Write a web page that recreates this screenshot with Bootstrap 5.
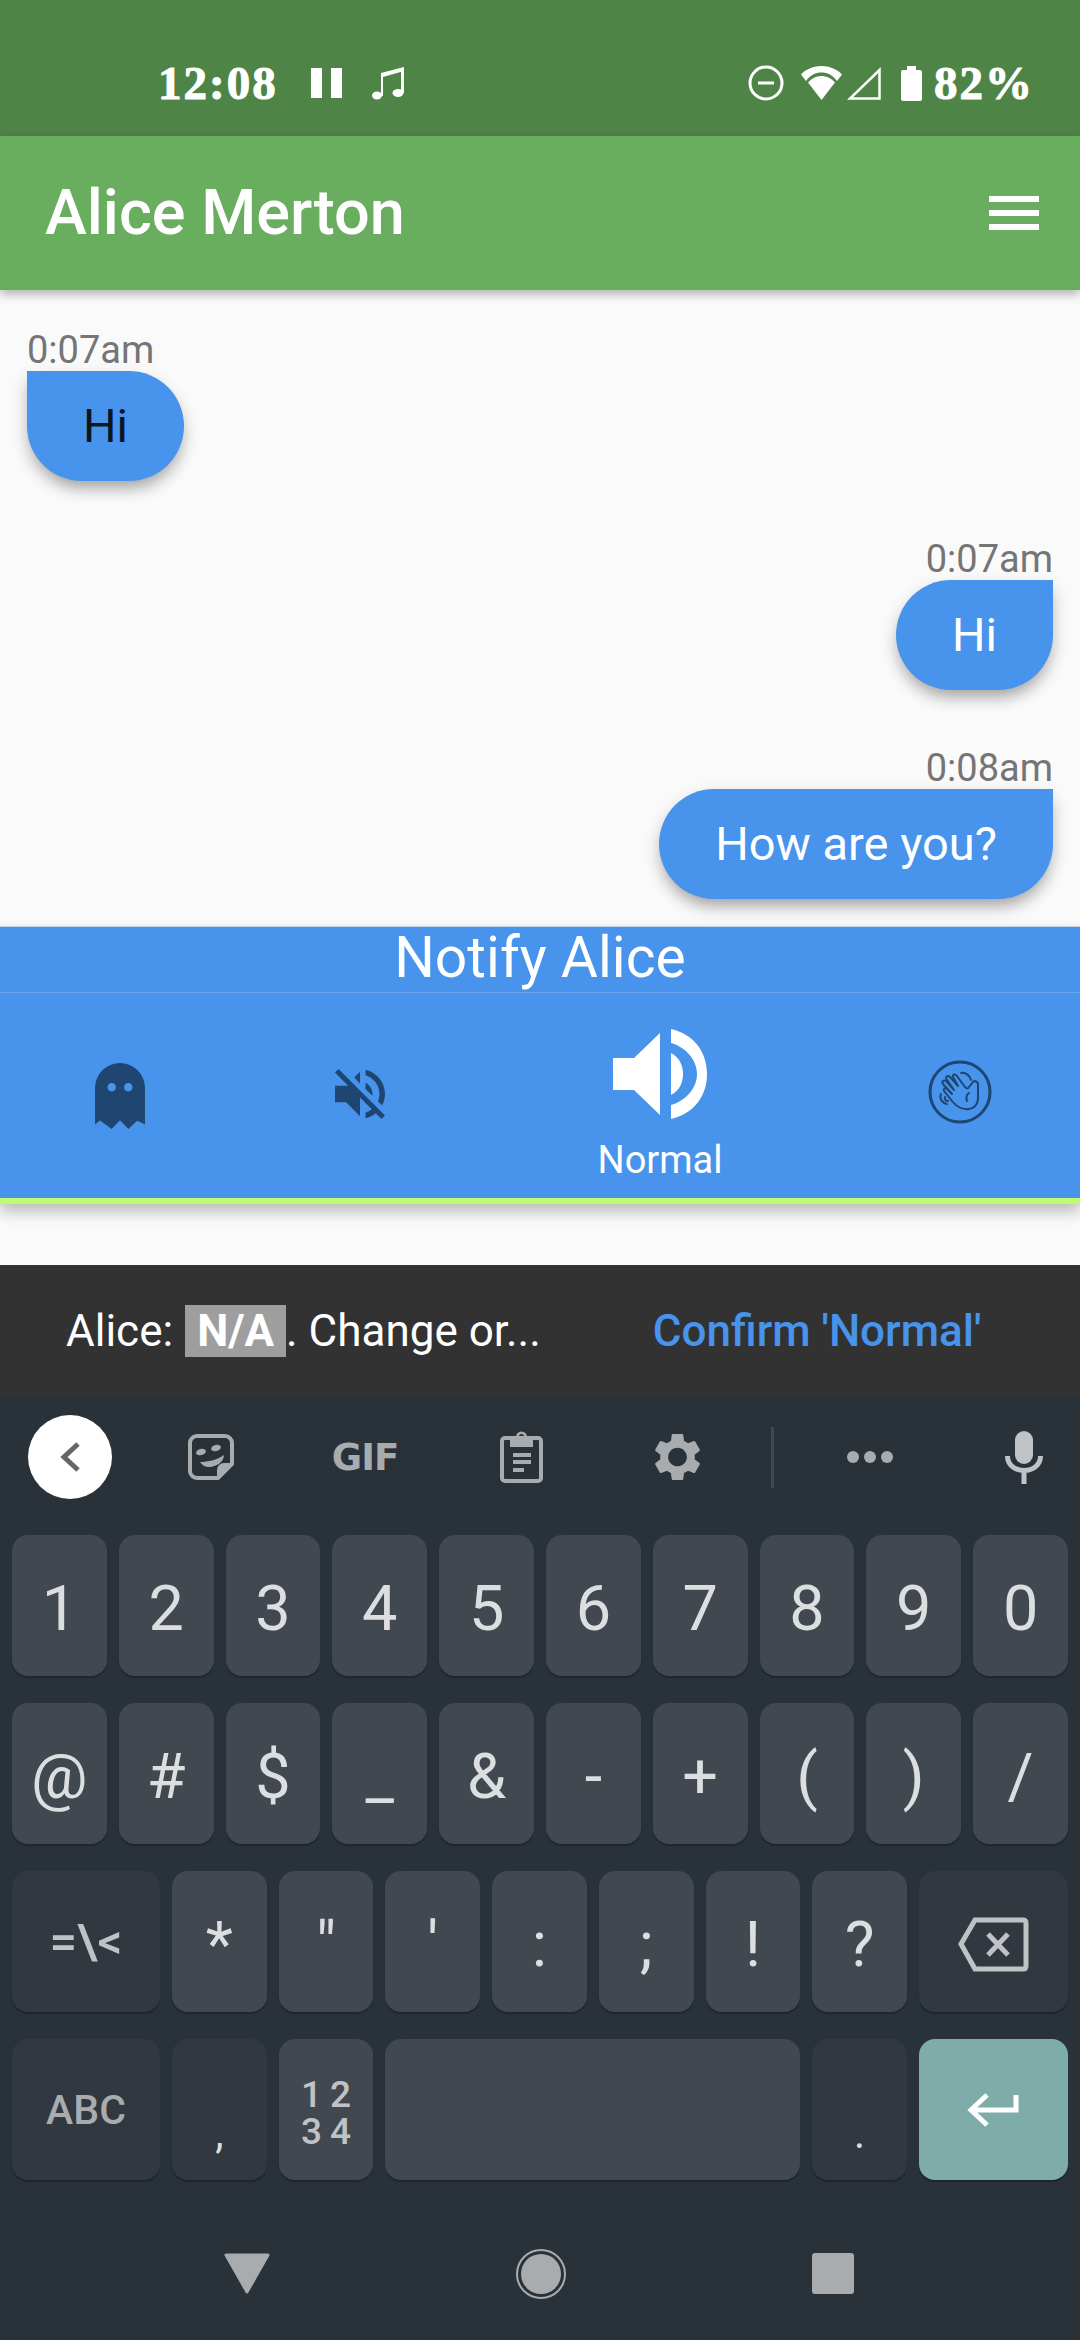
<!DOCTYPE html>
<html lang="en">
<head>
  <meta charset="UTF-8" />
  <meta name="viewport" content="width=device-width, initial-scale=1" />
  <title>Alice Merton</title>
  <link href="https://cdn.jsdelivr.net/npm/bootstrap@5.3.3/dist/css/bootstrap.min.css" rel="stylesheet" />
  <style>
    html, body { margin: 0; height: 2340px; overflow: hidden; }
    body { font-family: Roboto, sans-serif; background: #fafafa; }
    .phone { width: 1080px; height: 2340px; }

    .status-row { height: 136px; background: #4f8447; color: #fff; padding: 60px 46px 30px 158px; }
    .status-text { font: 700 47px "Liberation Serif", serif; line-height: 1; letter-spacing: 2px; -webkit-text-stroke: 1px #fff; }
    .st-pause { margin-left: 33px; }
    .st-note { margin-left: 30px; }
    .st-wifi { margin-left: 17px; }
    .st-signal { margin-left: 5px; }
    .st-batt { margin-left: 20px; }
    .st-pct { margin-left: 12px; }
    .app-head { height: 154px; background: #69ad5e; color: #fff; padding: 0 41px 0 45px; box-shadow: 0 4px 10px rgba(0,0,0,.3); position: relative; z-index: 2; }
    .app-title { font-size: 63px; font-weight: 500; }

    .chat-area { height: 636px; padding: 0 27px; }
    .chat-line { margin-top: 57px; }
    .chat-line:first-child { margin-top: 39px; }
    .chat-time { font-size: 38px; color: #757575; line-height: 42px; }
    .chat-bubble { height: 110px; background: #4893ec; font-size: 47px; padding: 0 56px; box-shadow: 0 10px 16px -4px rgba(0,0,0,.3), 0 6px 20px rgba(0,0,0,.1); }
    .bubble-in { border-radius: 0 55px 55px 55px; color: #0a1622; }
    .bubble-out { border-radius: 55px 0 55px 55px; color: #fff; }

    .notify-box { height: 278px; background: #4893ec; color: #fff; border-top: 1px solid #c5d5e5; border-bottom: 6px solid #bcfb72; box-shadow: 0 8px 14px rgba(0,0,0,.25); position: relative; z-index: 1; }
    .notify-title { height: 66px; font-size: 57px; line-height: 62px; text-align: center; border-bottom: 1px solid #6ba7ee; }
    .notify-opts { display: grid; grid-template-columns: 2fr 2fr 3fr 2fr; height: 205px; }
    .notify-on { padding-top: 36px; }
    .notify-label { font-size: 38px; line-height: 42px; margin-top: 20px; }
    .opt-mute { padding-bottom: 3px; }
    .opt-clap { padding-bottom: 8px; }

    .gap-strip { height: 61px; }
    .snack-box { height: 132px; background: #323232; color: #fff; font-size: 44px; padding-left: 66px; }
    .snack-tag { background: #9e9e9e; font-weight: 700; padding: 0 12px; margin-left: 12px; line-height: 52px; }
    .snack-action { color: #4893ec; font-weight: 500; margin-left: 112px; }

    .kb-area { height: 943px; background: #2a3239; color: #dcdee0; }
    .kb-tools { display: grid; grid-template-columns: 140px 142px 166px 146px 166px 24px 172px 136px; height: 138px; padding-bottom: 18px; overflow: hidden; }
    .back-circle { width: 84px; height: 84px; border-radius: 50%; background: #fff; }
    .gif-label { font: 700 37px "DejaVu Sans", sans-serif; letter-spacing: -1px; color: #a8acaf; }
    .kb-divider { width: 3px; height: 61px; background: #414950; }
    .kb-rows { display: flex; flex-direction: column; gap: 27px; padding: 0 12px; }
    .kb-row { display: grid; gap: 12px; height: 141px; }
    .kb-ten { grid-template-columns: repeat(10, 1fr); }
    .kb-low-row { grid-template-columns: 148px repeat(7, 1fr) 149px; }
    .kb-key { background: #41484f; border-radius: 16px; box-shadow: 0 2px 1px #1f262c; font-size: 63px; line-height: 1; padding-top: 6px; }
    .kb-dark { background: #31383f; }
    .kb-enter { background: #7eaca8; padding-top: 0; }
    .kb-span { grid-column: span 4; }
    .kb-low { font-size: 42px; padding-bottom: 25px; }
    .kb-abc { font-size: 41px; font-weight: 500; color: #a8acaf; padding-top: 2px; }
    .kb-mix { font-size: 49px; font-weight: 500; color: #c0c3c5; padding-top: 0; }
    .kb-small { font-size: 37px; font-weight: 500; line-height: 37px; letter-spacing: 8px; padding-left: 8px; text-align: center; color: #c0c3c5; }
    .nav-strip { height: 159px; padding: 28px 226px 0 224px; }
  </style>
</head>
<body>
  <div class="phone d-flex flex-column">
    <div class="status-row d-flex justify-content-between align-items-center">
      <div class="d-flex align-items-center">
        <span class="status-text">12:08</span>
        <svg class="st-pause" width="31" height="30" viewBox="0 0 31 30"><path fill="#fff" d="M0 0h11v30H0zM20 0h11v30H20z"/></svg>
        <svg class="st-note" width="32" height="33" viewBox="0 0 32 33"><g fill="#fff"><path d="M9 6 32 0v4L11 10v19H9zM29 2h3v24h-3z"/><ellipse cx="5" cy="28.500" rx="5" ry="4"/><ellipse cx="26" cy="26" rx="5.500" ry="4"/></g></svg>
      </div>
      <div class="d-flex align-items-center">
        <svg width="36" height="36" viewBox="0 0 36 36"><circle cx="18" cy="18" r="16" fill="none" stroke="#fff" stroke-width="3"/><path fill="#fff" d="M10 16.500h16v3H10z"/></svg>
        <svg class="st-wifi" width="41" height="34" viewBox="0 0 41 34"><path fill="#fff" d="M0 8.500C5 3 13 0 20.500 0S36 3 41 8.500L36 15C32 9 26 6.500 20.500 6.500S9 9 5 15Z"/><path fill="#fff" d="M20.500 34 7 16.500C11 12 16 10 20.500 10S30 12 34 16.500Z"/></svg>
        <svg class="st-signal" width="34" height="34" viewBox="0 0 34 34"><path fill="none" stroke="#fff" stroke-width="2.500" d="M32.500 4v28.500H3Z"/></svg>
        <svg class="st-batt" width="21" height="35" viewBox="0 0 21 35"><path fill="#fff" d="M6 0h9v4h4a2 2 0 0 1 2 2v27a2 2 0 0 1-2 2H2a2 2 0 0 1-2-2V6a2 2 0 0 1 2-2h4Z"/></svg>
        <span class="status-text st-pct">82%</span>
      </div>
    </div>

    <div class="app-head d-flex justify-content-between align-items-center">
      <span class="app-title">Alice Merton</span>
      <svg width="50" height="34" viewBox="0 0 50 34"><path fill="#fff" d="M0 0h50v6H0zM0 14h50v6H0zM0 28h50v6H0z"/></svg>
    </div>

    <div class="chat-area">
      <div class="chat-line d-flex flex-column align-items-start">
        <div class="chat-time">0:07am</div>
        <div class="chat-bubble bubble-in d-flex align-items-center">Hi</div>
      </div>
      <div class="chat-line d-flex flex-column align-items-end">
        <div class="chat-time">0:07am</div>
        <div class="chat-bubble bubble-out d-flex align-items-center">Hi</div>
      </div>
      <div class="chat-line d-flex flex-column align-items-end">
        <div class="chat-time">0:08am</div>
        <div class="chat-bubble bubble-out d-flex align-items-center">How are you?</div>
      </div>
    </div>

    <div class="notify-box">
      <div class="notify-title">Notify Alice</div>
      <div class="notify-opts">
        <div class="d-flex align-items-center justify-content-center">
          <svg width="50" height="66" viewBox="0 0 50 66"><path fill="#1f4670" fill-rule="evenodd" d="M0 25a25 25 0 0 1 50 0v36.500L42.300 57.700 33.300 66 25 57.300 16.700 66 5 57.500 0 61.500ZM16.700 20a4.200 4.200 0 1 0 0 8.500 4.200 4.200 0 0 0 0-8.500Zm16.600 0a4.200 4.200 0 1 0 0 8.500 4.200 4.200 0 0 0 0-8.500Z"/></svg>
        </div>
        <div class="opt-mute d-flex align-items-center justify-content-center">
          <svg width="50" height="50" viewBox="3 3 18 18"><path fill="#1f4670" d="M16.500 12c0-1.770-1.020-3.290-2.500-4.030v2.210l2.450 2.450c.03-.2.05-.41.05-.63zm2.500 0c0 .94-.2 1.820-.54 2.640l1.510 1.510C20.630 14.910 21 13.500 21 12c0-4.280-2.990-7.860-7-8.770v2.060c2.890.86 5 3.540 5 6.710zM4.270 3 3 4.270 7.730 9H3v6h4l5 5v-6.730l4.250 4.250c-.67.52-1.420.93-2.250 1.180v2.060c1.380-.31 2.630-.95 3.690-1.810L19.730 21 21 19.730l-9-9L4.270 3zM12 4 9.910 6.090 12 8.180V4z"/></svg>
        </div>
        <div class="notify-on d-flex flex-column align-items-center">
          <svg width="94" height="90" viewBox="0 0 94 90"><g fill="#fff"><path d="M0 29H21L47 4V86L21 61H0Z"/><path d="M58 0C80 5 94 22 94 45S80 85 58 90V76C72 72 84 60 84 45S72 18 58 14Z"/><path d="M58 24C66 28 70 36 70 45S66 62 58 66Z"/></g></svg>
          <div class="notify-label">Normal</div>
        </div>
        <div class="opt-clap d-flex align-items-center justify-content-center">
          <svg width="64" height="64" viewBox="0 0 64 64"><g fill="none" stroke="#1f4670"><circle cx="32" cy="32" r="30" stroke-width="3"/><g stroke-width="2" stroke-linecap="round" stroke-linejoin="round"><path d="M50 24V38C50 45 45 50 38 49 32 49 28 46 24 41L16 31C15 29 17 27 19 29L24 34 15 24C13 21.500 16 19.500 18 21L26 30 18.500 19C17 16.500 20 15 22 17L30 26 25 17C24 14.500 27 13.500 28.500 15.500L37 27C39 29 40 29 41 27L45 22C47 20 50 22 50 24Z"/><path d="M33 13C38 12 42 16 43 20"/><path d="M13 34C11 38 14 43 19 44"/><path d="M17 37C16 39 18 41 20 41"/><path d="M41 33C38 35 38 38 39 41"/></g></g></svg>
        </div>
      </div>
    </div>

    <div class="gap-strip"></div>

    <div class="snack-box d-flex align-items-center">
      <span>Alice:</span>
      <span class="snack-tag">N/A</span>
      <span>. Change or...</span>
      <span class="snack-action">Confirm 'Normal'</span>
    </div>

    <div class="kb-area">
      <div class="kb-tools">
        <div class="d-flex align-items-center justify-content-center">
          <div class="back-circle d-flex align-items-center justify-content-center">
            <svg width="21" height="30" viewBox="0 0 21 30"><path fill="none" stroke="#666" stroke-width="5" d="M18 2 4 15l14 13"/></svg>
          </div>
        </div>
        <div class="d-flex align-items-center justify-content-center">
          <svg width="46" height="46" viewBox="0 0 46 46"><g fill="#a8acaf"><path fill="none" stroke="#a8acaf" stroke-width="4" d="M9 2H37A7 7 0 0 1 44 9V30L30 44H9A7 7 0 0 1 2 37V9A7 7 0 0 1 9 2Z"/><path d="M44 29H36A7 7 0 0 0 29 36V44Z"/><ellipse cx="13" cy="18" rx="5" ry="3" transform="rotate(-15 13 18)"/><ellipse cx="28" cy="14" rx="5" ry="3" transform="rotate(-15 28 14)"/><path d="M12 28C20 28 29 26 36 21 36 28 28 33 21 33 17 33 14 31 12 28Z"/></g></svg>
        </div>
        <div class="d-flex align-items-center justify-content-center">
          <span class="gif-label">GIF</span>
        </div>
        <div class="d-flex align-items-center justify-content-center">
          <svg width="43" height="52" viewBox="0 0 43 52"><g fill="#a8acaf"><rect x="2" y="7" width="39" height="43" rx="3" fill="none" stroke="#a8acaf" stroke-width="4"/><path fill-rule="evenodd" d="M10 6h6a5.500 5.500 0 0 1 11 0h6v10H10ZM21.500 3a2.500 2.500 0 1 0 0 5 2.500 2.500 0 0 0 0-5Z"/><path d="M13 22h18v4H13zM13 29h18v4H13zM13 37h11v4H13z"/></g></svg>
        </div>
        <div class="d-flex align-items-center justify-content-center">
          <svg width="47" height="48" viewBox="2.500 2 19 20"><path fill="#a8acaf" d="M19.140 12.940c.04-.3.06-.61.06-.94 0-.32-.02-.64-.07-.94l2.030-1.580c.18-.14.23-.41.12-.61l-1.920-3.320c-.12-.22-.37-.29-.59-.22l-2.390.96c-.5-.38-1.030-.7-1.620-.94l-.36-2.540c-.04-.24-.24-.41-.48-.41h-3.840c-.24 0-.43.17-.47.41l-.36 2.540c-.59.24-1.130.57-1.620.94l-2.390-.96c-.22-.08-.47 0-.59.22L2.740 8.870c-.12.21-.08.47.12.61l2.030 1.580c-.05.3-.09.63-.09.94s.02.64.07.94l-2.030 1.580c-.18.14-.23.41-.12.61l1.920 3.320c.12.22.37.29.59.22l2.390-.96c.5.38 1.030.7 1.620.94l.36 2.540c.05.24.24.41.48.41h3.840c.24 0 .44-.17.47-.41l.36-2.540c.59-.24 1.130-.56 1.620-.94l2.390.96c.22.08.47 0 .59-.22l1.920-3.320c.12-.22.07-.47-.12-.61l-2.010-1.580zM12 15.900c-2.150 0-3.900-1.750-3.900-3.900s1.750-3.900 3.900-3.900 3.900 1.750 3.900 3.900-1.750 3.900-3.900 3.900z"/></svg>
        </div>
        <div class="d-flex align-items-center justify-content-center"><div class="kb-divider"></div></div>
        <div class="d-flex align-items-center justify-content-center">
          <svg width="46" height="12" viewBox="0 0 46 12"><g fill="#a8acaf"><circle cx="6" cy="6" r="6"/><circle cx="23" cy="6" r="6"/><circle cx="40" cy="6" r="6"/></g></svg>
        </div>
        <div class="d-flex align-items-center justify-content-center">
          <svg width="38" height="53" viewBox="0 0 38 53"><rect x="10" width="18" height="33" rx="9" fill="#c0c3c5"/><path fill="none" stroke="#c0c3c5" stroke-width="5" d="M2.500 25C2.500 34 10 39.500 19 39.500S35.500 34 35.500 25M19 39v14"/></svg>
        </div>
      </div>

      <div class="kb-rows">
        <div class="kb-row kb-ten">
          <div class="kb-key d-flex align-items-center justify-content-center">1</div>
          <div class="kb-key d-flex align-items-center justify-content-center">2</div>
          <div class="kb-key d-flex align-items-center justify-content-center">3</div>
          <div class="kb-key d-flex align-items-center justify-content-center">4</div>
          <div class="kb-key d-flex align-items-center justify-content-center">5</div>
          <div class="kb-key d-flex align-items-center justify-content-center">6</div>
          <div class="kb-key d-flex align-items-center justify-content-center">7</div>
          <div class="kb-key d-flex align-items-center justify-content-center">8</div>
          <div class="kb-key d-flex align-items-center justify-content-center">9</div>
          <div class="kb-key d-flex align-items-center justify-content-center">0</div>
        </div>
        <div class="kb-row kb-ten">
          <div class="kb-key d-flex align-items-center justify-content-center">@</div>
          <div class="kb-key d-flex align-items-center justify-content-center">#</div>
          <div class="kb-key d-flex align-items-center justify-content-center">$</div>
          <div class="kb-key d-flex align-items-center justify-content-center">_</div>
          <div class="kb-key d-flex align-items-center justify-content-center">&amp;</div>
          <div class="kb-key d-flex align-items-center justify-content-center">-</div>
          <div class="kb-key d-flex align-items-center justify-content-center">+</div>
          <div class="kb-key d-flex align-items-center justify-content-center">(</div>
          <div class="kb-key d-flex align-items-center justify-content-center">)</div>
          <div class="kb-key d-flex align-items-center justify-content-center">/</div>
        </div>
        <div class="kb-row kb-low-row">
          <div class="kb-key kb-dark kb-mix d-flex align-items-center justify-content-center">=\&lt;</div>
          <div class="kb-key d-flex align-items-center justify-content-center">*</div>
          <div class="kb-key d-flex align-items-center justify-content-center">"</div>
          <div class="kb-key d-flex align-items-center justify-content-center">'</div>
          <div class="kb-key d-flex align-items-center justify-content-center">:</div>
          <div class="kb-key d-flex align-items-center justify-content-center">;</div>
          <div class="kb-key d-flex align-items-center justify-content-center">!</div>
          <div class="kb-key d-flex align-items-center justify-content-center">?</div>
          <div class="kb-key kb-dark d-flex align-items-center justify-content-center">
            <svg width="71" height="55" viewBox="0 0 71 55"><path fill="none" stroke="#c0c3c5" stroke-width="5" d="M17 3H65Q68 3 68 6V49Q68 52 65 52H17L3 27ZM30 17 50 38M50 17 30 38"/></svg>
          </div>
        </div>
        <div class="kb-row kb-low-row">
          <div class="kb-key kb-dark kb-abc d-flex align-items-center justify-content-center">ABC</div>
          <div class="kb-key kb-dark kb-low d-flex align-items-end justify-content-center">,</div>
          <div class="kb-key kb-small d-flex align-items-center justify-content-center"><div>12<br />34</div></div>
          <div class="kb-key kb-span"></div>
          <div class="kb-key kb-dark kb-low d-flex align-items-end justify-content-center">.</div>
          <div class="kb-key kb-enter d-flex align-items-center justify-content-center">
            <svg width="52" height="34" viewBox="0 0 52 34"><path fill="none" stroke="#fff" stroke-width="5" d="M49 2V17H5M20 2 4 17l16 15"/></svg>
          </div>
        </div>
      </div>

      <div class="nav-strip d-flex justify-content-between align-items-center">
        <svg width="46" height="41" viewBox="0 0 46 41"><path fill="#a8acaf" stroke="#a8acaf" stroke-width="3" stroke-linejoin="round" d="M2 2H44L23 39Z"/></svg>
        <svg width="50" height="50" viewBox="0 0 50 50"><circle cx="25" cy="25" r="24" fill="none" stroke="#a8acaf" stroke-width="2"/><circle cx="25" cy="25" r="20" fill="#a8acaf"/></svg>
        <svg width="42" height="41" viewBox="0 0 42 41"><rect width="42" height="41" rx="3" fill="#a8acaf"/></svg>
      </div>
    </div>
  </div>
</body>
</html>
